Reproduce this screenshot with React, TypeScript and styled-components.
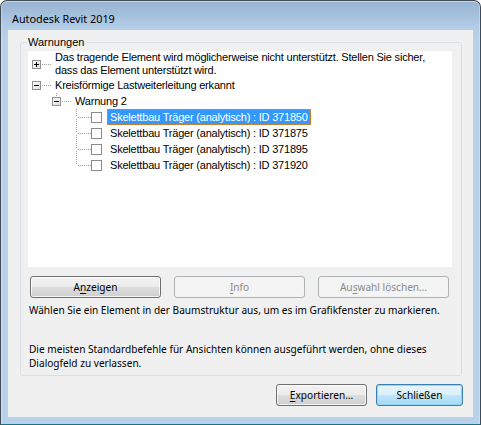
import React from "react";
import styled, { createGlobalStyle, css } from "styled-components";

const UI_FONT = `"Noto Sans", "Open Sans", sans-serif`;
const TREE_FONT = `"Liberation Sans", Arial, sans-serif`;

const GlobalStyle = createGlobalStyle`
  html, body { margin: 0; padding: 0; }
  body { background: #ffffff; font-family: ${UI_FONT}; }
  *, *::before, *::after { box-sizing: border-box; }
`;

const Window = styled.div`
  width: 481px;
  height: 425px;
  display: flex;
  flex-direction: column;
  border: 1px solid #404a55;
  border-bottom-color: #1e6f80;
  border-radius: 7px 7px 0 0;
  background: linear-gradient(to bottom, #98b3d0 0px, #b4cee8 28px, #b9d1ea 40px, #b9d1ea 100%);
  box-shadow: inset 0 1px 0 rgba(255, 255, 255, 0.45), inset 1px 0 0 rgba(255, 255, 255, 0.3),
    inset -1px 0 0 rgba(255, 255, 255, 0.3);
  overflow: hidden;
`;

const TitleBar = styled.div`
  height: 29px;
  display: flex;
  align-items: center;
  padding: 5px 0 0 11px;
  font-family: ${UI_FONT};
  font-size: 10.8px;
  color: #000;
`;

const Client = styled.div`
  flex: 1;
  margin: 0 7px 7px 7px;
  background: #f0f0f0;
  display: flex;
  flex-direction: column;
`;

const Group = styled.fieldset`
  margin: 6px 11px 0 12px;
  padding: 0 9px 5px 7px;
  border: 1px solid #d5dfe5;
  border-radius: 3px;
  min-width: 0;
`;

const GroupLegend = styled.legend`
  padding: 0 1px;
  margin-left: -1px;
  font-family: ${TREE_FONT};
  font-size: 11px;
  line-height: 13px;
  color: #000;
`;

const Tree = styled.div`
  margin-top: 2px;
  height: 216px;
  background: #ffffff;
  font-family: ${TREE_FONT};
  font-size: 11px;
  letter-spacing: -0.2px;
  color: #000;
  overflow: hidden;
`;

const Row = styled.div<{ $level: number; $h: number }>`
  display: flex;
  align-items: center;
  height: ${(p) => p.$h}px;
  padding-left: ${(p) => p.$level * 20}px;
`;

const Label = styled.span<{ $selected?: boolean }>`
  padding: 0 3px;
  line-height: 13px;
  white-space: pre-line;
  ${(p) =>
    p.$selected &&
    css`
      align-self: stretch;
      display: flex;
      align-items: center;
      padding: 0 2px;
      background: #3399ff;
      color: #ffffff;
      border: 1px dotted #d08a3c;
    `}
`;

const StateBox = styled.span`
  width: 11px;
  height: 11px;
  margin: 0 5px 0 -1px;
  border: 1px solid #8a8a8a;
  background: #ffffff;
  flex: none;
`;

const ActionRow = styled.div`
  display: flex;
  gap: 13px;
  margin-top: 9px;
  padding-left: 2px;
`;

type Variant = "normal" | "disabled" | "default";

const Button = styled.button<{ $variant?: Variant; $w: number }>`
  width: ${(p) => p.$w}px;
  height: 22px;
  padding: 0;
  border-radius: 3px;
  font-family: ${UI_FONT};
  font-size: 10.1px;
  line-height: 14px;
  color: #000;
  border: 1px solid #707070;
  background: linear-gradient(to bottom, #f2f2f2 0%, #ebebeb 48%, #dddddd 52%, #cfcfcf 100%);
  box-shadow: inset 0 0 0 1px rgba(255, 255, 255, 0.75);
  cursor: default;
  u {
    text-underline-offset: 2px;
  }
  ${(p) =>
    p.$variant === "disabled" &&
    css`
      color: #8a8a8a;
      border-color: #adb2b5;
      background: #f4f4f4;
      box-shadow: none;
    `}
  ${(p) =>
    p.$variant === "default" &&
    css`
      border-color: #3c7fb1;
      background: linear-gradient(to bottom, #eaf6fd 0%, #d9f0fc 48%, #bee6fd 52%, #a7d9f5 100%);
      box-shadow: inset 0 0 0 1px #8fd8fa;
    `}
`;

const Hint = styled.p<{ $gap: number }>`
  margin: ${(p) => p.$gap}px 0 0 1px;
  font-family: ${UI_FONT};
  font-size: 10.1px;
  line-height: 14px;
  color: #000;
`;

const Footer = styled.div`
  display: flex;
  justify-content: flex-end;
  gap: 9px;
  margin: 8px 10px 0 0;
`;

const DOT = "#a0a0a0";

function Connector({
  h,
  box,
  up,
  down,
}: {
  h: number;
  box?: "plus" | "minus";
  up?: boolean;
  down?: boolean;
}) {
  const c = Math.floor(h / 2);
  const dots: React.ReactElement[] = [];
  const top = box ? c - 4 : c;
  if (up) {
    for (let y = 0; y < top; y += 2) dots.push(<rect key={`u${y}`} x={8} y={y} width={1} height={1} fill={DOT} />);
  }
  if (down) {
    for (let y = box ? c + 6 : c + 2; y < h; y += 2)
      dots.push(<rect key={`d${y}`} x={8} y={y} width={1} height={1} fill={DOT} />);
  }
  for (let x = box ? 14 : 10; x <= 22; x += 2)
    dots.push(<rect key={`h${x}`} x={x} y={c} width={1} height={1} fill={DOT} />);
  return (
    <svg width={24} height={h} style={{ flex: "none", display: "block" }}>
      <defs>
        <linearGradient id="tvbox" x1="0" y1="0" x2="1" y2="1">
          <stop offset="0" stopColor="#ffffff" />
          <stop offset="1" stopColor="#dcdcdc" />
        </linearGradient>
      </defs>
      {dots}
      {box && (
        <g shapeRendering="crispEdges">
          <rect x={4.5} y={c - 3.5} width={8} height={8} fill="url(#tvbox)" stroke="#919191" />
          <rect x={6} y={c} width={5} height={1} fill="#000" />
          {box === "plus" && <rect x={8} y={c - 2} width={1} height={5} fill="#000" />}
        </g>
      )}
    </svg>
  );
}

const items = ["371850", "371875", "371895", "371920"];

export default function App() {
  return (
    <>
      <GlobalStyle />
      <Window>
        <TitleBar>Autodesk Revit 2019</TitleBar>
        <Client>
          <Group>
            <GroupLegend>Warnungen</GroupLegend>
            <Tree>
              <Row $level={0} $h={26}>
                <Connector h={26} box="plus" />
                <Label>
                  {"Das tragende Element wird möglicherweise nicht unterstützt. Stellen Sie sicher,\ndass das Element unterstützt wird."}
                </Label>
              </Row>
              <Row $level={0} $h={16}>
                <Connector h={16} box="minus" />
                <Label>Kreisförmige Lastweiterleitung erkannt</Label>
              </Row>
              <Row $level={1} $h={16}>
                <Connector h={16} box="minus" up />
                <Label>Warnung 2</Label>
              </Row>
              {items.map((id, i) => (
                <Row key={id} $level={2} $h={16}>
                  <Connector h={16} up down={i < items.length - 1} />
                  <StateBox />
                  <Label $selected={i === 0}>Skelettbau Träger (analytisch) : ID {id}</Label>
                </Row>
              ))}
            </Tree>
            <ActionRow>
              <Button $w={131}>
                A<u>n</u>zeigen
              </Button>
              <Button $w={131} $variant="disabled">
                <u>I</u>nfo
              </Button>
              <Button $w={131} $variant="disabled">
                Au<u>s</u>wahl löschen…
              </Button>
            </ActionRow>
            <Hint $gap={5}>
              Wählen Sie ein Element in der Baumstruktur aus, um es im Grafikfenster zu markieren.
            </Hint>
            <Hint $gap={25}>
              Die meisten Standardbefehle für Ansichten können ausgeführt werden, ohne dieses
              <br />
              Dialogfeld zu verlassen.
            </Hint>
          </Group>
          <Footer>
            <Button $w={91}>
              <u>E</u>xportieren…
            </Button>
            <Button $w={87} $variant="default">
              Schließen
            </Button>
          </Footer>
        </Client>
      </Window>
    </>
  );
}
